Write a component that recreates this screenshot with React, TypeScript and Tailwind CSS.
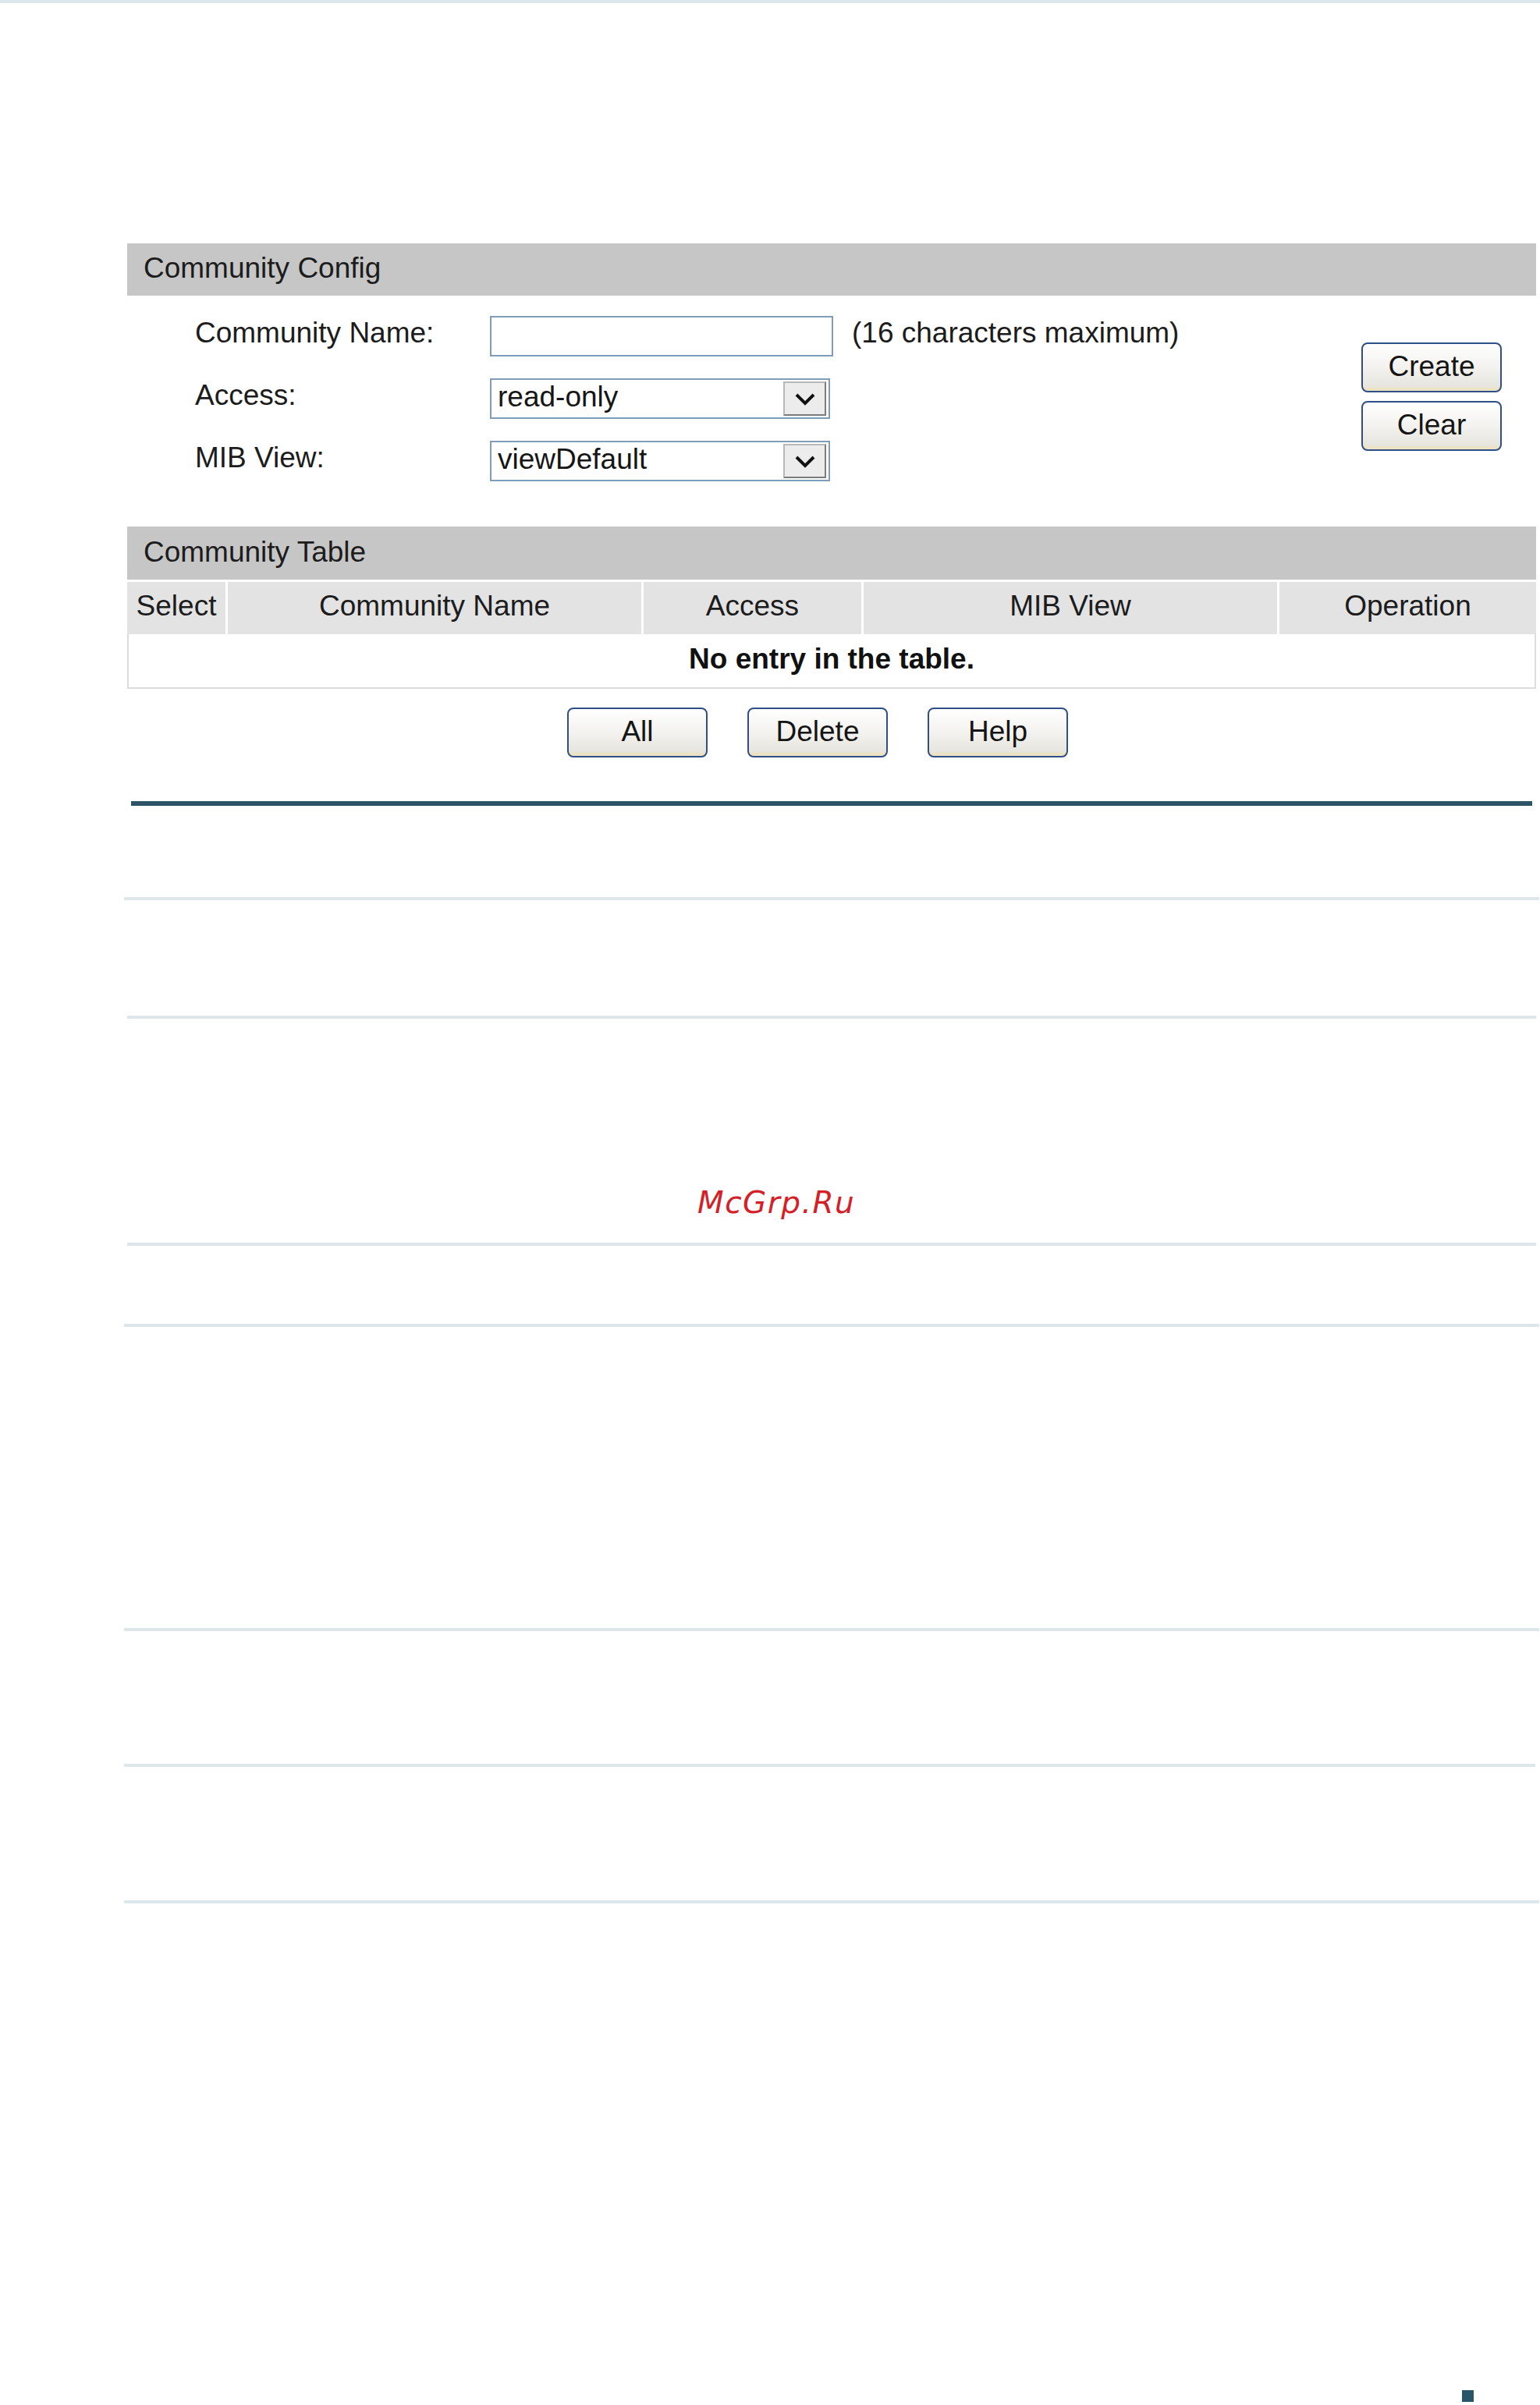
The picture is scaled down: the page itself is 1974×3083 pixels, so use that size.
import React from "react";

function XpButton({ children }: { children: React.ReactNode }) {
  return (
    <button
      type="button"
      className="flex h-[64px] w-[180px] items-center justify-center rounded-[8px] border-2 border-[#2f4f86] bg-linear-to-b from-[#ffffff] via-[#f3f2ef] to-[#e4e2da] pb-[2px] text-[37px] text-[#151515] shadow-[inset_0_-5px_0_-1px_#ece3c4]"
    >
      {children}
    </button>
  );
}

function Chevron() {
  return (
    <svg width="28" height="17" viewBox="0 0 28 17" fill="none">
      <polyline points="3,3 14,14 25,3" stroke="#111" strokeWidth="4" strokeLinecap="butt" strokeLinejoin="miter" />
    </svg>
  );
}

function FakeSelect({ value }: { value: string }) {
  return (
    <div className="flex h-[52px] w-[436px] items-stretch border-2 border-[#7f9db9] bg-white">
      <span className="flex flex-1 items-center pl-[8px] pb-[4px] text-[#161616]">{value}</span>
      <span className="my-[2px] mr-[3px] flex w-[55px] items-center justify-center border-2 border-[#b8b8b8] border-r-[#7c7c7c] border-b-[#7c7c7c] bg-[#ececec]">
        <Chevron />
      </span>
    </div>
  );
}

export default function App() {
  return (
    <div className="relative h-[3083px] w-[1974px] overflow-hidden bg-white font-['Liberation_Sans',Arial,sans-serif] text-[37px] text-[#1c1c1c]">
      <div className="h-[4px] bg-[#dce6eb]" />

      <div className="ml-[163px] mt-[308px] w-[1806px]">
        {/* Community Config */}
        <div className="flex h-[67px] items-center bg-[#c6c6c6] pl-[21px] pb-[3px]">Community Config</div>

        <div className="flex justify-between pl-[87px] pr-[44px] pt-[26px]">
          <div className="flex flex-col gap-[28px]">
            <div className="flex h-[52px] items-center">
              <span className="w-[378px] pb-[8px]">Community Name:</span>
              <input
                type="text"
                defaultValue=""
                className="h-[52px] w-[440px] border-2 border-[#7f9db9] bg-white outline-none"
              />
              <span className="ml-[24px] pb-[8px]">(16 characters maximum)</span>
            </div>
            <div className="flex h-[52px] items-center">
              <span className="w-[378px] pb-[8px]">Access:</span>
              <FakeSelect value="read-only" />
            </div>
            <div className="flex h-[52px] items-center">
              <span className="w-[378px] pb-[8px]">MIB View:</span>
              <FakeSelect value="viewDefault" />
            </div>
          </div>
          <div className="mt-[34px] flex flex-col gap-[11px]">
            <XpButton>Create</XpButton>
            <XpButton>Clear</XpButton>
          </div>
        </div>

        {/* Community Table */}
        <div className="mt-[58px] flex h-[68px] items-center bg-[#c6c6c6] pl-[21px] pb-[3px]">Community Table</div>
        <div className="mt-[3px] flex h-[67px]">
          <div className="flex w-[129px] items-center justify-center border-r-[3px] border-white bg-[#e3e3e3] pb-[5px]">Select</div>
          <div className="flex w-[533px] items-center justify-center border-r-[3px] border-white bg-[#e3e3e3] pb-[5px]">Community Name</div>
          <div className="flex w-[282px] items-center justify-center border-r-[3px] border-white bg-[#e3e3e3] pb-[5px]">Access</div>
          <div className="flex w-[533px] items-center justify-center border-r-[3px] border-white bg-[#e3e3e3] pb-[5px]">MIB View</div>
          <div className="flex w-[329px] items-center justify-center bg-[#e3e3e3] pb-[5px]">Operation</div>
        </div>
        <div className="flex h-[70px] items-center justify-center border-2 border-t-0 border-[#dcdcdc] pb-[4px] font-bold text-[#111]">
          No entry in the table.
        </div>

        <div className="mt-[24px] flex gap-[51px] pl-[564px]">
          <XpButton>All</XpButton>
          <XpButton>Delete</XpButton>
          <XpButton>Help</XpButton>
        </div>

        <div className="ml-[5px] mt-[56px] h-[6px] w-[1796px] bg-[#2c5366]" />
      </div>

      <div className="ml-[159px] mt-[117px] h-[4px] w-[1814px] bg-[#dde6ea]" />
      <div className="ml-[163px] mt-[148px] h-[4px] w-[1806px] bg-[#dde6ea]" />
      <div className="mt-[216px] h-[39px] pl-[894px] font-['DejaVu_Sans',sans-serif] text-[39px] italic leading-[39px] tracking-[1.5px] text-[#d42027]">
        McGrp.Ru
      </div>
      <div className="ml-[163px] mt-[32px] h-[4px] w-[1806px] bg-[#dde6ea]" />
      <div className="ml-[159px] mt-[100px] h-[4px] w-[1814px] bg-[#dde6ea]" />
      <div className="ml-[159px] mt-[386px] h-[4px] w-[1814px] bg-[#dde6ea]" />
      <div className="ml-[159px] mt-[170px] h-[4px] w-[1809px] bg-[#dde6ea]" />
      <div className="ml-[159px] mt-[171px] h-[4px] w-[1814px] bg-[#dde6ea]" />
      <div className="ml-[1874px] mt-[624px] h-[15px] w-[15px] bg-[#2a5467]" />
    </div>
  );
}
